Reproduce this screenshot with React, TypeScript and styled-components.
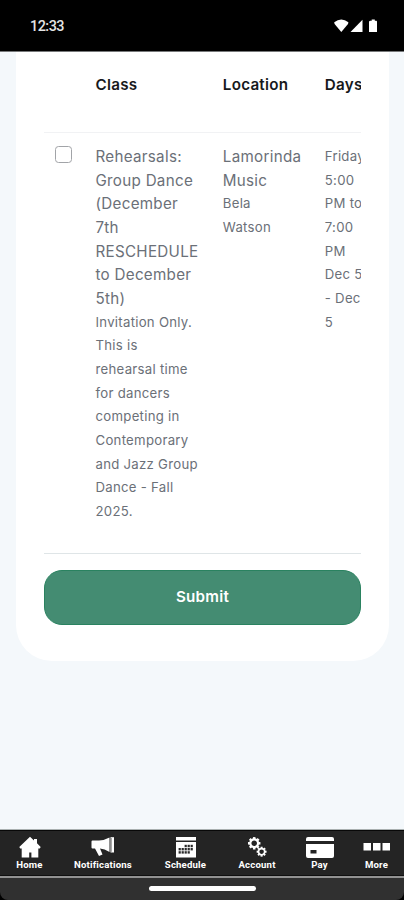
import React from "react";
import styled, { createGlobalStyle } from "styled-components";

const Global = createGlobalStyle`
  * { box-sizing: border-box; }
  body { margin: 0; background: #000; font-family: Inter, "Liberation Sans", sans-serif; }
`;

const Screen = styled.div`
  width: 404px;
  height: 900px;
  display: flex;
  flex-direction: column;
  overflow: hidden;
  background: #f4f8fb;
`;

const StatusBar = styled.header`
  height: 52px;
  flex: none;
  display: flex;
  align-items: center;
  justify-content: space-between;
  padding: 1px 26px 0 30px;
  background: #000;
  color: #e4e4e4;
  border-bottom: 1px solid #77797a;
`;

const Clock = styled.span`
  font: 500 14.4px/20px Roboto, sans-serif;
  letter-spacing: -0.5px;
  padding-top: 1px;
`;

const StatusIcons = styled.svg`
  display: block;
  width: 44px;
  height: 14px;
`;

const Content = styled.main`
  flex: 1;
  min-height: 0;
  padding: 0 15px 0 16px;
`;

const Card = styled.section`
  height: 609px;
  padding: 0 28px;
  background: #fff;
  border-radius: 0 0 36px 36px;
`;

const TableScroller = styled.div`
  width: 317px;
  overflow: hidden;
`;

const Row = styled.div<{ $head?: boolean }>`
  display: grid;
  grid-template-columns: 51.5px 127.3px 102px 90px;
  width: 371px;
  height: ${(p) => (p.$head ? "81px" : "420.5px")};
  padding-top: ${(p) => (p.$head ? "21px" : "12.1px")};
  border-bottom: 1px solid ${(p) => (p.$head ? "#f1f2f4" : "#dfe5e7")};
`;

const HeadCell = styled.div`
  font-size: 15.2px;
  line-height: 24px;
  font-weight: 600;
  letter-spacing: 0.25px;
  color: #17191c;
`;

const Cell = styled.div`
  white-space: nowrap;
  color: #6b7078;
`;

const Line = styled.div<{ $small?: boolean }>`
  height: 23.67px;
  line-height: 23.67px;
  font-size: ${(p) => (p.$small ? "13.2px" : "15.2px")};
  letter-spacing: ${(p) => (p.$small ? "0.27px" : "0.28px")};
`;

const Checkbox = styled.input`
  appearance: none;
  display: block;
  width: 17px;
  height: 17px;
  margin: 0.5px 0 0 11px;
  border: 1.5px solid #a2a4a8;
  border-radius: 3.5px;
  background: #fff;
`;

const Submit = styled.button`
  display: block;
  width: 317px;
  height: 55px;
  margin-top: 16px;
  padding: 0;
  border: 1px solid #2a8260;
  border-radius: 18px;
  background: #448c72;
  color: #fff;
  font: 600 15.2px/20px Inter, sans-serif;
  letter-spacing: 0.25px;
`;

const NavBar = styled.nav`
  height: 49px;
  flex: none;
  display: grid;
  grid-template-columns: 59px 88px 77px 66px 59px 55px;
  background: #242424;
  border-top: 1px solid #a9b0b0;
  border-bottom: 2px solid #929292;
  box-shadow: inset 0 1px #080808, inset 0 -1px #101010;
`;

const NavItem = styled.a`
  display: flex;
  flex-direction: column;
  align-items: center;
  padding-top: 6px;
  color: #fff;
`;

const NavIcon = styled.svg`
  display: block;
  height: 23px;
  flex: none;
  fill: #fff;
`;

const NavLabel = styled.span`
  font: 700 9.6px/11px Roboto, sans-serif;
  letter-spacing: 0.18px;
  white-space: nowrap;
`;

const GestureArea = styled.footer`
  height: 22px;
  flex: none;
  display: flex;
  justify-content: center;
  padding-top: 8px;
  background: #303030;
  border-radius: 0 0 8px 8px;
`;

const Backdrop = styled.div`
  flex: none;
  background: #000;
`;

const Handle = styled.div`
  width: 107px;
  height: 5px;
  border-radius: 3px;
  background: #fff;
`;

const classLines = ["Rehearsals:", "Group Dance", "(December", "7th", "RESCHEDULE", "to December", "5th)"];
const noteLines = [
  "Invitation Only.", "This is", "rehearsal time", "for dancers", "competing in",
  "Contemporary", "and Jazz Group", "Dance - Fall", "2025.",
];
const dayLines = ["Friday", "5:00", "PM to", "7:00", "PM", "Dec 5", "- Dec", "5"];

const gearTeeth = [0, 45, 90, 135, 180, 225, 270, 315];

const Gear = ({ x, y, s }: { x: number; y: number; s: number }) => (
  <g transform={`translate(${x} ${y}) scale(${s})`}>
    <circle r="4.3" fill="none" stroke="#fff" strokeWidth="2.4" />
    {gearTeeth.map((a) => (
      <rect key={a} x="-1.4" y="-6.9" width="2.8" height="2.2" transform={`rotate(${a})`} />
    ))}
  </g>
);

const navItems = [
  {
    label: "Home", width: 22,
    icon: <path d="M11 .8 L15 4.4 V3 H18 V7.2 L21.7 11 L20.8 12.4 H19.3 V21.5 H12.4 V16.5 H10.2 V21.5 H2.7 V12.4 H1.2 L.3 11 Z" />,
  },
  {
    label: "Notifications", width: 24,
    icon: (
      <>
        <path d="M.5 5.5 Q.5 4.5 1.5 4.5 H8 Q13 4.5 18.5 1.5 V16 Q13.5 12.8 9 12.5 L11.5 18.5 L8 20 L4 12.5 H1.5 Q.5 12.5 .5 11.5 Z" />
        <path d="M19.5 1.2 H23 V16.5 H19.5 Z" />
        <path d="M20.3 2 V15.8" stroke="#777" strokeWidth=".8" />
      </>
    ),
  },
  {
    label: "Schedule", width: 20,
    icon: (
      <>
        <path d="M0 1 H20 V4.5 H0 Z M0 6 H20 V21.5 H0 Z" />
        <g fill="#282828">
          {[8.8, 12, 15.2].map((y, r) =>
            [2.6, 5.6, 8.6, 11.6, 14.6].slice(r === 0 ? 2 : 0, r === 2 ? 4 : 5).map((x) => (
              <rect key={`${x}-${y}`} x={x} y={y} width="2.2" height="2.4" />
            ))
          )}
        </g>
      </>
    ),
  },
  {
    label: "Account", width: 20,
    icon: (<><Gear x={7.2} y={7.3} s={0.9} /><Gear x={14.6} y={15.7} s={0.72} /></>),
  },
  {
    label: "Pay", width: 28,
    icon: (
      <>
        <path d="M2 1 H26 Q28 1 28 3 V5 H0 V3 Q0 1 2 1 Z M0 8 H28 V20 Q28 22 26 22 H2 Q0 22 0 20 Z" />
        <rect x="4.5" y="14" width="6" height="3.5" fill="#242424" />
      </>
    ),
  },
  {
    label: "More", width: 27,
    icon: (<path d="M0.5 7 H8 V14.5 H.5 Z M10 7 H17.5 V14.5 H10 Z M19.5 7 H27 V14.5 H19.5 Z" />),
  },
];

export default function App() {
  return (
    <Screen>
      <Global />
      <StatusBar>
        <Clock>12:33</Clock>
        <StatusIcons viewBox="0 0 44 14" fill="#fff">
          <path d="M.2 3.2 Q7.3 -2.2 14.4 3.2 L14 5 L7.3 13 L.6 5 Z" />
          <path d="M28.5 .8 V13 H16.5 Z" />
          <path d="M36 1.8 H37.7 V.6 H40.8 V1.8 H42.5 L43 2.5 V13 H35 V2.5 Z" />
        </StatusIcons>
      </StatusBar>
      <Content>
        <Card>
          <TableScroller>
            <Row $head>
              <div />
              <HeadCell>Class</HeadCell>
              <HeadCell>Location</HeadCell>
              <HeadCell>Days</HeadCell>
            </Row>
            <Row>
              <Checkbox type="checkbox" aria-label="Select class" />
              <Cell>
                {classLines.map((t) => <Line key={t}>{t}</Line>)}
                {noteLines.map((t) => <Line $small key={t}>{t}</Line>)}
              </Cell>
              <Cell>
                <Line>Lamorinda</Line>
                <Line>Music</Line>
                <Line $small>Bela</Line>
                <Line $small>Watson</Line>
              </Cell>
              <Cell>
                {dayLines.map((t) => <Line $small key={t}>{t}</Line>)}
              </Cell>
            </Row>
          </TableScroller>
          <Submit type="button">Submit</Submit>
        </Card>
      </Content>
      <NavBar>
        {navItems.map((n) => (
          <NavItem key={n.label}>
            <NavIcon width={n.width} viewBox={`0 0 ${n.width} 23`}>{n.icon}</NavIcon>
            <NavLabel>{n.label}</NavLabel>
          </NavItem>
        ))}
      </NavBar>
      <Backdrop>
        <GestureArea><Handle /></GestureArea>
      </Backdrop>
    </Screen>
  );
}
